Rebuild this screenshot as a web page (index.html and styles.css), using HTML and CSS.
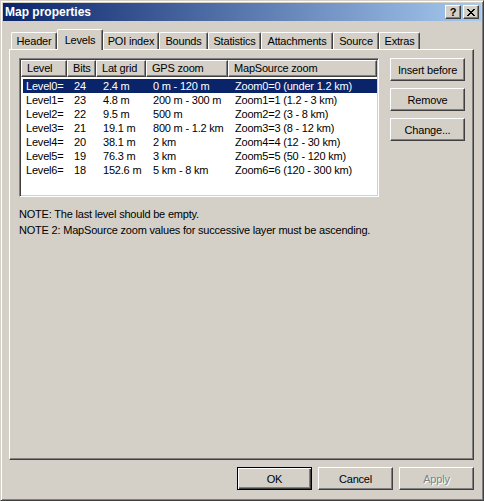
FILE: index.html
```html
<!DOCTYPE html>
<html lang="en">
<head>
    <meta charset="UTF-8">
    <title>Map properties</title>
    <link rel="stylesheet" href="styles.css">
</head>
<body>

    <div class="window">
        <div class="titlebar">
            <span class="title">Map properties</span>
            <div class="caption-buttons">
                <button class="cap-btn cap-help">?</button>
                <button class="cap-btn">
                    <svg width="8" height="7" viewBox="0 0 8 7">
                        <path d="M0 0h2v1h-2zM6 0h2v1h-2zM1 1h2v1h-2zM5 1h2v1h-2zM2 2h4v1h-4zM3 3h2v1h-2zM2 4h4v1h-4zM1 5h2v1h-2zM5 5h2v1h-2zM0 6h2v1h-2zM6 6h2v1h-2z" fill="#000"/>
                    </svg>
                </button>
            </div>
        </div>

        <div class="sheet">
            <div class="tabs">
                <div class="tab w-header">Header</div>
                <div class="tab selected w-levels">Levels</div>
                <div class="tab w-poi">POI index</div>
                <div class="tab w-bounds">Bounds</div>
                <div class="tab w-stats">Statistics</div>
                <div class="tab w-attach">Attachments</div>
                <div class="tab w-source">Source</div>
                <div class="tab w-extras">Extras</div>
            </div>

            <div class="panel">
                <div class="panel-top">
                    <div class="listview">
                        <div class="lv-head">
                            <span>Level</span>
                            <span>Bits</span>
                            <span>Lat grid</span>
                            <span>GPS zoom</span>
                            <span>MapSource zoom</span>
                        </div>
                        <div class="lv-body">
                            <div class="lv-row selected"><span>Level0=</span><span>24</span><span>2.4 m</span><span>0 m - 120 m</span><span>Zoom0=0 (under 1.2 km)</span></div>
                            <div class="lv-row"><span>Level1=</span><span>23</span><span>4.8 m</span><span>200 m - 300 m</span><span>Zoom1=1 (1.2 - 3 km)</span></div>
                            <div class="lv-row"><span>Level2=</span><span>22</span><span>9.5 m</span><span>500 m</span><span>Zoom2=2 (3 - 8 km)</span></div>
                            <div class="lv-row"><span>Level3=</span><span>21</span><span>19.1 m</span><span>800 m - 1.2 km</span><span>Zoom3=3 (8 - 12 km)</span></div>
                            <div class="lv-row"><span>Level4=</span><span>20</span><span>38.1 m</span><span>2 km</span><span>Zoom4=4 (12 - 30 km)</span></div>
                            <div class="lv-row"><span>Level5=</span><span>19</span><span>76.3 m</span><span>3 km</span><span>Zoom5=5 (50 - 120 km)</span></div>
                            <div class="lv-row"><span>Level6=</span><span>18</span><span>152.6 m</span><span>5 km - 8 km</span><span>Zoom6=6 (120 - 300 km)</span></div>
                        </div>
                    </div>
                    <div class="side-buttons">
                        <button class="btn">Insert before</button>
                        <button class="btn">Remove</button>
                        <button class="btn">Change...</button>
                    </div>
                </div>
                <div class="notes">
                    <div>NOTE: The last level should be empty.</div>
                    <div>NOTE 2: MapSource zoom values for successive layer must be ascending.</div>
                </div>
            </div>

            <div class="footer">
                <button class="btn btn-default">OK</button>
                <button class="btn">Cancel</button>
                <button class="btn" disabled>Apply</button>
            </div>
        </div>
    </div>

</body>
</html>
```

FILE: styles.css
```css
body {
    margin: 0;
    font-family: 'Liberation Sans', Arial, sans-serif;
    font-size: 11px;
    letter-spacing: -0.2px;
    background-color: #d4d0c8;
    color: #000;
}

.window {
    width: 484px;
    height: 501px;
    box-sizing: border-box;
    display: flex;
    flex-direction: column;
    padding: 2px;
    background-color: #d4d0c8;
    border: 1px solid;
    border-color: #d4d0c8 #404040 #404040 #d4d0c8;
    box-shadow: inset 1px 1px #fff, inset -1px -1px #808080;
}

/* title bar */
.titlebar {
    height: 18px;
    flex-shrink: 0;
    display: flex;
    align-items: center;
    justify-content: space-between;
    padding: 0 2px;
    background: linear-gradient(to right, #0a246a, #a6caf0);
}

.title {
    color: #fff;
    font-weight: bold;
    font-size: 12px;
    letter-spacing: 0;
}

.caption-buttons {
    display: flex;
    gap: 2px;
}

.cap-btn {
    width: 16px;
    height: 14px;
    box-sizing: border-box;
    padding: 0;
    display: flex;
    align-items: center;
    justify-content: center;
    background-color: #d4d0c8;
    border: 1px solid;
    border-color: #fff #404040 #404040 #fff;
    box-shadow: inset -1px -1px #808080;
}

.cap-help {
    font-family: 'Liberation Sans', Arial, sans-serif;
    font-weight: bold;
    font-size: 11px;
    line-height: 12px;
}

/* property sheet */
.sheet {
    flex: 1;
    padding: 8px 7px 0 6px;
}

.tabs {
    display: flex;
    align-items: flex-end;
    height: 21px;
    padding-left: 2px;
    margin-bottom: -1px;
    position: relative;
    z-index: 1;
}

.tab {
    height: 17px;
    box-sizing: border-box;
    margin-bottom: 1px;
    display: flex;
    align-items: center;
    justify-content: center;
    background-color: #d4d0c8;
    border-left: 1px solid #fff;
    border-top: 1px solid #fff;
    border-right: 1px solid #404040;
    border-radius: 2px 2px 0 0;
    box-shadow: inset -1px 0 #808080;
    white-space: nowrap;
}

.tab.selected {
    height: 21px;
    margin-bottom: 0;
    padding-bottom: 1px;
}

.w-header { width: 46px; }
.w-levels { width: 46px; }
.w-poi { width: 56px; }
.w-bounds { width: 49px; }
.w-stats { width: 53px; }
.w-attach { width: 72px; }
.w-source { width: 46px; }
.w-extras { width: 41px; }

.panel {
    height: 411px;
    box-sizing: border-box;
    padding: 8px 0 0 9px;
    border: 1px solid;
    border-color: #fff #404040 #404040 #fff;
    box-shadow: inset -1px -1px #808080;
}

.panel-top {
    display: flex;
    align-items: flex-start;
    gap: 11px;
}

/* list view */
.listview {
    width: 360px;
    height: 139px;
    box-sizing: border-box;
    padding: 1px;
    background-color: #fff;
    border: 1px solid;
    border-color: #808080 #fff #fff #808080;
    box-shadow: inset 1px 1px #404040, inset -1px -1px #d4d0c8;
    overflow: hidden;
}

.lv-head {
    display: grid;
    grid-template-columns: 46px 29px 50px 82px 1fr;
    height: 17px;
}

.lv-head span {
    box-sizing: border-box;
    padding-left: 5px;
    line-height: 14px;
    background-color: #d4d0c8;
    border: 1px solid;
    border-color: #fff #404040 #404040 #fff;
    box-shadow: inset -1px -1px #808080;
    white-space: nowrap;
}

.lv-body {
    padding: 2px 0 0 2px;
}

.lv-row {
    display: grid;
    grid-template-columns: 44px 29px 50px 82px 1fr;
    height: 14px;
    line-height: 14px;
    white-space: nowrap;
}

.lv-row span {
    padding-left: 7px;
}

.lv-row span:first-child {
    padding-left: 3px;
}

.lv-row.selected {
    background-color: #0a246a;
    color: #fff;
}

/* buttons */
.side-buttons {
    display: flex;
    flex-direction: column;
    gap: 7px;
}

.btn {
    width: 75px;
    height: 23px;
    box-sizing: border-box;
    padding: 0;
    font: inherit;
    letter-spacing: inherit;
    color: #000;
    background-color: #d4d0c8;
    border: 1px solid;
    border-color: #fff #404040 #404040 #fff;
    box-shadow: inset -1px -1px #808080;
}

.btn-default {
    border-color: #000;
    box-shadow: inset 1px 1px #fff, inset -1px -1px #404040, inset -2px -2px #808080;
}

.btn:disabled {
    color: #808080;
    text-shadow: 1px 1px #fff;
}

.notes {
    margin-top: 9px;
    line-height: 16px;
}

.footer {
    display: flex;
    justify-content: flex-end;
    gap: 6px;
    margin-top: 7px;
}
```
